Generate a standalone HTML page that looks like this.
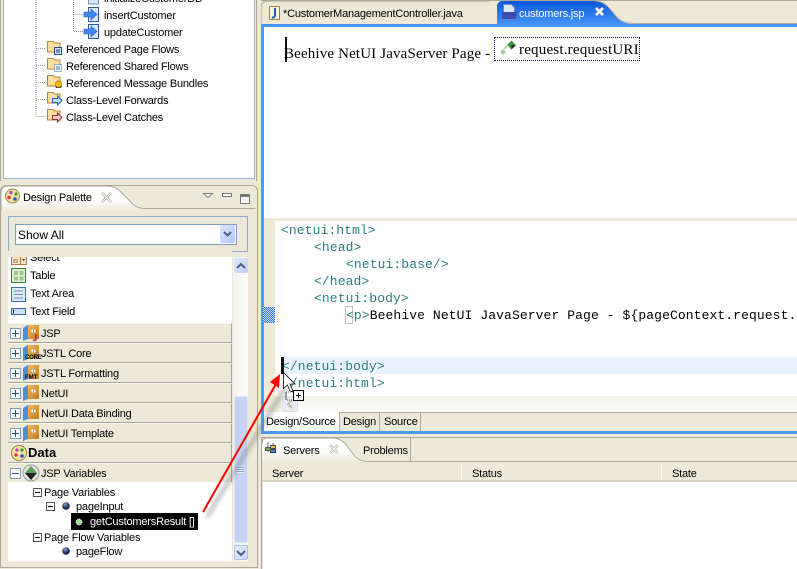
<!DOCTYPE html>
<html><head><meta charset="utf-8"><style>
html,body{margin:0;padding:0}
body{width:797px;height:569px;overflow:hidden;background:#ece9d8;position:relative;font-family:"Liberation Sans",sans-serif;font-size:11px;color:#000}
div,svg.a{position:absolute}
.t{position:absolute;white-space:nowrap;line-height:14px;height:14px;letter-spacing:-.2px;margin-top:1px}
.s{font-family:"Liberation Serif",serif;font-size:15px;line-height:16px;height:16px}
.c{position:absolute;white-space:pre;font-family:"Liberation Mono",monospace;font-size:13px;line-height:17px;color:#2a7f80;letter-spacing:.1px}
.d{left:8px;width:224px;height:20px;background:#ece9d8;border-bottom:1px solid #a8a596;border-right:1px solid #a8a596;border-top:1px solid #f8f7f1;box-sizing:border-box}
.p{position:absolute;left:2px;top:4px;width:9px;height:9px;background:#fff;border:1px solid #7f9db9}
.p:before{content:"";position:absolute;left:1px;top:4px;width:7px;height:1px;background:#1c4f96}
.p.x:after{content:"";position:absolute;left:4px;top:1px;width:1px;height:7px;background:#1c4f96}
.m{position:absolute;width:7px;height:7px;border:1px solid #555;background:#fff}
.m:before{content:"";position:absolute;left:1px;top:3px;width:5px;height:1px;background:#000}
</style></head><body>

<!-- top left outline view -->
<div style="left:3px;top:-2px;width:250px;height:179px;background:#fff;border:1px solid #9db4cc"></div>
<div style="left:0;top:0;width:1px;height:181px;background:#aca899"></div>
<div style="left:256px;top:0;width:1px;height:181px;background:#aca899"></div>

<svg class="a" style="left:0;top:0" width="260" height="130">
<g stroke="#999" stroke-dasharray="1 1" fill="none" shape-rendering="crispEdges">
<path d="M73.500 0V31.500H84M73.500 14.500H84M36 0V116.500H46M36 48.500H46M36 65.500H46M36 82.500H46M36 99.500H46"/>
</g>
<path d="M88.500 7.500h10v14h-10z" fill="#dbe8f8" stroke="#2a5a98"/><path d="M84 12h7v-3l6 5.500-6 5.500v-3h-7z" fill="#3f87ee" stroke="#1d5cc0" stroke-width=".6"/>
<path d="M88.500 24.500h10v14h-10z" fill="#dbe8f8" stroke="#2a5a98"/><path d="M84 29h7v-3l6 5.500-6 5.500v-3h-7z" fill="#3f87ee" stroke="#1d5cc0" stroke-width=".6"/>
<path d="M88.500 -4h10v8h-10z" fill="#dbe8f8" stroke="#6a94c0"/>
<g fill="#fbdf9c" stroke="#b08a3c">
<path d="M47.500 44.500v-3h6l1 1.500h5.500v9h-12.500z"/><path d="M47.500 61.500v-3h6l1 1.500h5.500v9h-12.500z"/><path d="M47.500 78.500v-3h6l1 1.500h5.500v9h-12.500z"/><path d="M47.500 95.500v-3h6l1 1.500h5.500v9h-12.500z"/><path d="M47.500 112.500v-3h6l1 1.500h5.500v9h-12.500z"/>
</g>
<path d="M54.500 47.500h7v7h-7z" fill="#d8e4f0" stroke="#1f4c86"/><path d="M56 49h4v4h-4z" fill="#6d8fb6"/>
<path d="M54.500 64.500h7v7h-7z" fill="#f4f8fc" stroke="#3a6ea8" stroke-dasharray="1 1"/><path d="M56 66h4v4h-4z" fill="#9db8d8"/>
<path d="M55 86h7l-1 2h-5z" fill="#444"/><circle cx="58.500" cy="84" r="3.200" fill="#f2b400" stroke="#a87800" stroke-width=".6"/>
<path d="M52.500 98.500h5v-2.500l4.500 4.500-4.500 4.500v-2.500h-5z" fill="#bfe0fb" stroke="#1f62b8"/>
<path d="M52.500 115.500h5v-2.500l4.500 4.500-4.500 4.500v-2.500h-5z" fill="#f0c8c8" stroke="#8a3030"/>
</svg>
<div style="left:104px;top:0;width:110px;height:6px;overflow:hidden"><span class="t" style="left:0;top:-9px">initializeCustomerDB</span></div>
<span class="t" style="left:104px;top:8px">insertCustomer</span>
<span class="t" style="left:104px;top:25px">updateCustomer</span>
<span class="t" style="left:66px;top:42px">Referenced Page Flows</span>
<span class="t" style="left:66px;top:59px">Referenced Shared Flows</span>
<span class="t" style="left:66px;top:76px">Referenced Message Bundles</span>
<span class="t" style="left:66px;top:93px">Class-Level Forwards</span>
<span class="t" style="left:66px;top:110px">Class-Level Catches</span>

<!-- palette view -->
<div style="left:0;top:185px;width:256px;height:381px;border:1px solid #aca899;border-radius:6px 6px 0 0"></div>
<svg class="a" style="left:0;top:185px" width="257" height="26">
<defs><linearGradient id="tb" x1="0" y1="0" x2="0" y2="1"><stop offset="0" stop-color="#fff"/><stop offset=".55" stop-color="#fdfdfa"/><stop offset="1" stop-color="#ece9d8"/></linearGradient></defs>
<path d="M1 26V8Q1 1 8 1H106Q116 1 122 8L130 16Q135 23 144 23H146V26Z" fill="url(#tb)"/>
<path d="M1 26V8Q1 1 8 1H106Q116 1 122 8L130 16Q135 23 144 23.500H255.500" fill="none" stroke="#aca899"/>
<circle cx="12.500" cy="11" r="7" fill="#f3e3a0" stroke="#9a8a40"/>
<circle cx="11" cy="7.500" r="1.700" fill="#b040c0"/><circle cx="16" cy="9" r="1.600" fill="#30a030"/><circle cx="9" cy="12.500" r="1.700" fill="#e03030"/><circle cx="15" cy="14" r="1.800" fill="#2050d0"/>
<path d="M102 8l9 9M111 8l-9 9" stroke="#a9a99e" stroke-width="2.500"/><path d="M102 8l9 9M111 8l-9 9" stroke="#fff" stroke-width="1"/>
<path d="M203.500 8.500h9l-4.500 4z" fill="#fff" stroke="#777"/>
<path d="M222.500 8.500h9v3h-9z" fill="#fff" stroke="#777"/>
<path d="M240.500 9.500h9v9h-9z" fill="#fff" stroke="#777"/><path d="M241 11h8" stroke="#777" stroke-width="2"/>
</svg>
<span class="t" style="left:23px;top:190px">Design Palette</span>

<div style="left:8px;top:216px;width:238px;height:34px;border:1px solid #8eaac8"></div>
<div style="left:15px;top:224px;width:220px;height:19px;background:#fff;border:1px solid #7f9db9"></div>
<span class="t" style="left:18px;top:227px;font-size:12px;letter-spacing:0">Show All</span>
<div style="left:220px;top:225px;width:15px;height:18px;background:linear-gradient(135deg,#dce6fb,#b4c8f6);border-radius:2px"></div>
<svg class="a" style="left:220px;top:225px" width="16" height="18"><path d="M4 7l3.500 3.500L11 7" fill="none" stroke="#4d6185" stroke-width="2"/></svg>

<!-- palette list -->
<div style="left:8px;top:257px;width:224px;height:67px;background:#fff;overflow:hidden">
<svg class="a" style="left:3px;top:-1px" width="24" height="70">
<path d="M.5 .5h15v8h-15z" fill="#f3e3c8" stroke="#b07a3c"/><path d="M9.500 1v7" stroke="#b07a3c"/><path d="M2 4h5M2 6h5" stroke="#b07a3c"/><path d="M11 3h3l-1.500 2z" fill="#333"/>
<path d="M.5 12.500h14v14h-14z" fill="#dff0d4" stroke="#3c7c3c"/><path d="M3 15h4v4h-4zM8.500 15h4v4h-4zM3 20.500h4v4h-4zM8.500 20.500h4v4h-4z" fill="#9cc48c"/>
<path d="M.5 31.500h14v14h-14z" fill="#dce8f8" stroke="#3a6ea8"/><path d="M3 35h9M3 38.500h9M3 42h9" stroke="#6f94c4"/>
<path d="M.5 52.500h14v6h-14z" fill="#cfe0f6" stroke="#3a6ea8"/><path d="M2.500 53.500v4" stroke="#111"/>
</svg>
</div>
<span class="t" style="left:30px;top:250px">Select</span>
<div style="left:8px;top:251px;width:224px;height:6px;background:#ece9d8"></div>
<span class="t" style="left:30px;top:268px">Table</span>
<span class="t" style="left:30px;top:286px">Text Area</span>
<span class="t" style="left:30px;top:304px">Text Field</span>

<div class="d" style="top:323px"><div class="p x"></div></div>
<div class="d" style="top:343px"><div class="p x"></div></div>
<div class="d" style="top:363px"><div class="p x"></div></div>
<div class="d" style="top:383px"><div class="p x"></div></div>
<div class="d" style="top:403px"><div class="p x"></div></div>
<div class="d" style="top:423px"><div class="p x"></div></div>
<div class="d" style="top:443px"></div>
<div class="d" style="top:463px"><div class="p"></div></div>
<svg class="a" style="left:22px;top:321px" width="20" height="140">
<defs><linearGradient id="og" x1="0" y1="0" x2="1" y2="1"><stop offset="0" stop-color="#f2bb5a"/><stop offset="1" stop-color="#c07a20"/></linearGradient></defs>
<g id="bk"><path d="M1 7l5-3v14l-5 2z" fill="#4f8fd8"/><path d="M6 4h11v14h-11z" fill="url(#og)"/><path d="M9 10l2-2v4zM14 10l-2-2v4z" fill="#fff"/></g>
<use href="#bk" y="20"/><use href="#bk" y="40"/><use href="#bk" y="60"/><use href="#bk" y="80"/><use href="#bk" y="100"/>
<path d="M14 13v5q0 2-3 1" fill="none" stroke="#c03018" stroke-width="1.600"/>
</svg>
<span class="t" style="top:353px;left:25px;font-size:6px;font-weight:bold;letter-spacing:-.2px;line-height:8px;height:8px">CORE</span>
<span class="t" style="left:25px;top:373px;font-size:6px;font-weight:bold;letter-spacing:0;line-height:8px;height:8px">FMT</span>
<svg class="a" style="left:10px;top:443px" width="34" height="40">
<circle cx="9" cy="10" r="7.500" fill="#f3e3a0" stroke="#9a8a40"/><circle cx="7" cy="7" r="1.600" fill="#b040c0"/><circle cx="12" cy="7" r="1.600" fill="#30a030"/><circle cx="6" cy="12" r="1.600" fill="#e03030"/><circle cx="12" cy="13" r="1.800" fill="#2050d0"/>
<circle cx="21" cy="30" r="8" fill="#e4e4de" stroke="#999"/><path d="M21 23l6 7-6 7-6-7z" fill="#5aa05a"/><path d="M27 30l-6 7-6-7z" fill="#222"/>
</svg>
<span class="t" style="left:41px;top:326px">JSP</span>
<span class="t" style="left:41px;top:346px">JSTL Core</span>
<span class="t" style="left:41px;top:366px">JSTL Formatting</span>
<span class="t" style="left:41px;top:386px">NetUI</span>
<span class="t" style="left:41px;top:406px">NetUI Data Binding</span>
<span class="t" style="left:41px;top:426px">NetUI Template</span>
<span class="t" style="left:28px;top:445px;font-weight:bold;font-size:13px;letter-spacing:0">Data</span>
<span class="t" style="left:41px;top:466px">JSP Variables</span>

<!-- tree -->
<div style="left:8px;top:482px;width:224px;height:79px;background:#fff"></div>
<div class="m" style="left:33px;top:488px"></div>
<div class="m" style="left:46px;top:502px"></div>
<div class="m" style="left:33px;top:533px"></div>
<span class="t" style="left:44px;top:485px">Page Variables</span>
<span class="t" style="left:76px;top:499px">pageInput</span>
<svg class="a" style="left:60px;top:500px" width="14" height="60"><defs><radialGradient id="g" cx=".4" cy=".3"><stop offset="0" stop-color="#8ea2c8"/><stop offset="1" stop-color="#16244e"/></radialGradient></defs><circle cx="6" cy="6" r="3.800" fill="url(#g)"/><circle cx="6" cy="51" r="3.800" fill="url(#g)"/></svg>
<div style="left:71px;top:513px;width:127px;height:17px;background:#000"></div>
<svg class="a" style="left:73px;top:516px" width="12" height="12"><circle cx="6" cy="6" r="3" fill="#a8d8a0" stroke="#fff" stroke-dasharray="1 1"/></svg>
<span class="t" style="left:90px;top:514px;color:#fff">getCustomersResult []</span>
<span class="t" style="left:44px;top:530px">Page Flow Variables</span>
<span class="t" style="left:76px;top:544px">pageFlow</span>

<!-- palette scrollbar -->
<div style="left:233px;top:257px;width:15px;height:304px;background:linear-gradient(90deg,#f3f1ec,#fefefb)"></div>
<div style="left:234px;top:258px;width:14px;height:15px;background:linear-gradient(135deg,#e0e8fc,#bccdf7);border-radius:2px"></div>
<svg class="a" style="left:234px;top:258px" width="14" height="15"><path d="M3 10l4-4 4 4" fill="none" stroke="#4d6185" stroke-width="2"/></svg>
<div style="left:234px;top:396px;width:14px;height:147px;background:#c6d3f8;border:1px solid #dfe6f8;box-sizing:border-box;border-radius:2px"></div>
<div style="left:237px;top:466px;width:7px;height:7px;background:repeating-linear-gradient(180deg,#eef2fd 0 1px,#8ea6dc 1px 2px)"></div>
<div style="left:234px;top:545px;width:14px;height:15px;background:linear-gradient(135deg,#e8eefc,#c8d6f8);border-radius:2px;border:1px solid #b0c0e0;box-sizing:border-box"></div>
<svg class="a" style="left:234px;top:545px" width="14" height="15"><path d="M3 6l4 4 4-4" fill="none" stroke="#4d6185" stroke-width="2"/></svg>

<!-- editor folder -->
<div style="left:261px;top:0;width:536px;height:1px;background:#aca899"></div>
<svg class="a" style="left:261px;top:0" width="536" height="28">
<defs><linearGradient id="bl" x1="0" y1="0" x2="0" y2="1"><stop offset="0" stop-color="#0a56d8"/><stop offset="1" stop-color="#4a9afc"/></linearGradient></defs>
<path d="M0 27V8Q0 1 7 1H228" fill="#ece9d8" stroke="#aca899"/>
<path d="M0 24H536V27H0Z" fill="#4a9af8"/>
<path d="M236 24V7Q236 1 242 1H332Q343 1 350 10L356 17Q361 23 372 23.500H536V27H0V24Z" fill="url(#bl)"/>
<path d="M372 23.500H536" stroke="#aca899"/>
<path d="M336 1Q344 2 350 10L356 17Q361 23 372 23.500" fill="none" stroke="#b9bcb0"/>
<path d="M8.500 6.500h10v13h-10z" fill="#f7f1dd" stroke="#a5833c"/><path d="M14 8v7q0 3-3 2.500" fill="none" stroke="#1e5cb8" stroke-width="2"/>
<path d="M242.500 4.500h8l3 3v12h-11z" fill="#dbe6f8" stroke="#6a8cc0"/><path d="M241 12h14v7h-14z" fill="#3c4cb0"/>
<path d="M335 8l7 7M342 8l-7 7" stroke="#d8e0f0" stroke-width="3"/><path d="M335 8l7 7M342 8l-7 7" stroke="#fff" stroke-width="1.500"/>
</svg>
<span class="t" style="left:283px;top:6px">*CustomerManagementController.java</span>
<span class="t" style="left:519px;top:6px;color:#fff">customers.jsp</span>

<!-- editor frame -->
<div style="left:261px;top:24px;width:3px;height:410px;background:#4a9af8"></div>
<div style="left:261px;top:431px;width:536px;height:3px;background:#4a9af8"></div>
<div style="left:264px;top:27px;width:533px;height:191px;background:#fff"></div>
<div style="left:285px;top:37px;width:2px;height:25px;background:#111"></div>
<span class="t s" style="left:284px;top:45px;letter-spacing:.15px">Beehive NetUI JavaServer Page -</span>
<div style="left:494px;top:37px;width:146px;height:24px;box-sizing:border-box;border:1px dotted #000080"></div>
<svg class="a" style="left:498px;top:39px" width="20" height="16"><path d="M9 6l4.500-4.500L18 6l-4.500 4.500z" fill="#3a9a3a"/><path d="M13.500 6H18l-4.500 4.500z" fill="#222"/><path d="M2 13l3-3 3 3-3 3z" fill="#a8cca8"/><path d="M6 10l4-4" stroke="#b8d0b8" stroke-width="2"/></svg>
<span class="t s" style="left:519px;top:41px;letter-spacing:.2px">request.requestURI</span>

<!-- source area -->
<div style="left:264px;top:221px;width:533px;height:175px;background:#fff"></div>
<div style="left:264px;top:221px;width:11px;height:175px;background:#ece9d8"></div>
<div style="left:275px;top:221px;width:6px;height:175px;background:#fbfaf6"></div>
<div style="left:281px;top:357px;width:516px;height:17px;background:#e8f2fe"></div>
<div style="left:263px;top:307px;width:12px;height:16px;background:repeating-conic-gradient(#3c78d8 0 25%,#c4d8f4 0 50%) 0 0/2px 2px"></div>
<div class="c" style="left:281px;top:222px">&lt;netui:html&gt;</div>
<div class="c" style="left:314px;top:239px">&lt;head&gt;</div>
<div class="c" style="left:346px;top:256px">&lt;netui:base/&gt;</div>
<div class="c" style="left:314px;top:273px">&lt;/head&gt;</div>
<div class="c" style="left:314px;top:290px">&lt;netui:body&gt;</div>
<div style="left:345px;top:306px;width:6px;height:16px;border:1px solid #c0c0c0"></div>
<div style="left:346px;top:307px;width:451px;height:17px;overflow:hidden"><div class="c" style="left:0;top:0">&lt;p&gt;<span style="color:#000">Beehive NetUI JavaServer Page - ${pageContext.request.requestURI}</span></div></div>
<div class="c" style="left:282px;top:358px">&lt;/netui:body&gt;</div>
<div class="c" style="left:282px;top:375px">&lt;/netui:html&gt;</div>
<div style="left:281px;top:357px;width:3px;height:17px;background:#111"></div>
<div style="left:281px;top:396px;width:516px;height:17px;background:linear-gradient(180deg,#f0efe8,#fff)"></div>
<div style="left:282px;top:396px;width:16px;height:16px;background:#e9ecf2;border:1px solid #ddd;box-sizing:border-box;border-radius:2px"></div>
<svg class="a" style="left:282px;top:396px" width="16" height="16"><path d="M10 4l-4 4 4 4" fill="none" stroke="#bbb" stroke-width="2"/></svg>

<!-- bottom tabs of editor -->
<div style="left:264px;top:412px;width:533px;height:1px;background:#aca899"></div>
<div style="left:264px;top:413px;width:533px;height:18px;background:#ece9d8"></div>
<div style="left:264px;top:412px;width:75px;height:19px;background:#fff"></div>
<div style="left:339px;top:413px;width:1px;height:18px;background:#aca899"></div>
<div style="left:379px;top:413px;width:1px;height:18px;background:#aca899"></div>
<div style="left:420px;top:413px;width:1px;height:18px;background:#aca899"></div>
<span class="t" style="left:266px;top:414px">Design/Source</span>
<span class="t" style="left:343px;top:414px">Design</span>
<span class="t" style="left:384px;top:414px">Source</span>

<!-- servers view -->
<div style="left:261px;top:437px;width:536px;height:1px;background:#aca899"></div>
<div style="left:261px;top:437px;width:1px;height:132px;background:#aca899"></div>
<svg class="a" style="left:261px;top:437px" width="536" height="25">
<defs><linearGradient id="tb2" x1="0" y1="0" x2="0" y2="1"><stop offset="0" stop-color="#fff"/><stop offset=".55" stop-color="#fdfdfa"/><stop offset="1" stop-color="#ece9d8"/></linearGradient></defs>
<path d="M1 25V7Q1 1 6 1H72Q80 1 86 9L92 17Q97 24 107 24.500V25Z" fill="url(#tb2)"/>
<path d="M107 24.500H536M1 7Q1 1 6 1H72Q80 1 86 9L92 17Q97 24 107 24.500" fill="none" stroke="#aca899"/>
<path d="M149.500 1v23" stroke="#aca899"/>
<path d="M12 6v3M7 5v10M12 10v6" stroke="#667" fill="none"/>
<path d="M9.500 8.500h5v3h-5z" fill="#e0c040" stroke="#555"/><path d="M9.500 12.500h5v3h-5z" fill="#4a90d8" stroke="#335"/><path d="M4.500 10.500h5v3h-5z" fill="#70b040" stroke="#555"/>
<path d="M69 8l8 8M77 8l-8 8" stroke="#a9a99e" stroke-width="2.500"/><path d="M69 8l8 8M77 8l-8 8" stroke="#fff"/>
</svg>
<span class="t" style="left:283px;top:443px">Servers</span>
<span class="t" style="left:363px;top:443px">Problems</span>
<span class="t" style="left:272px;top:466px">Server</span>
<span class="t" style="left:472px;top:466px">Status</span>
<span class="t" style="left:672px;top:466px">State</span>
<div style="left:461px;top:465px;width:1px;height:14px;background:#fff"></div>
<div style="left:661px;top:465px;width:1px;height:14px;background:#fff"></div>
<div style="left:262px;top:480px;width:535px;height:2px;background:#d6d2c2"></div>
<div style="left:263px;top:482px;width:534px;height:87px;background:#fff"></div>

<!-- arrow and cursor -->
<svg class="a" style="left:0;top:0" width="797" height="569">
<defs><filter id="bl2" x="-30%" y="-30%" width="160%" height="160%"><feGaussianBlur stdDeviation="2"/></filter></defs>
<path d="M207 517L285 388" stroke="#777" stroke-width="4" opacity=".5" filter="url(#bl2)"/>
<path d="M203 512L276 384" stroke="#f00" stroke-width="2"/>
<path d="M280 374L270 382L279 388Z" fill="#f00"/>
<path d="M283.500 372.500v16l4-3.500 3 7 2.500-1-3-7h5z" fill="#fff" stroke="#000" stroke-width=".8"/>
<path d="M286 392h12v8h-12zM286 392v7" fill="none" stroke="#555" stroke-dasharray="1 1"/>
<path d="M293.500 390.500h10v10h-10z" fill="#fff" stroke="#000"/><path d="M296 395.500h5M298.500 393v5" stroke="#000"/>
</svg>
</body></html>
